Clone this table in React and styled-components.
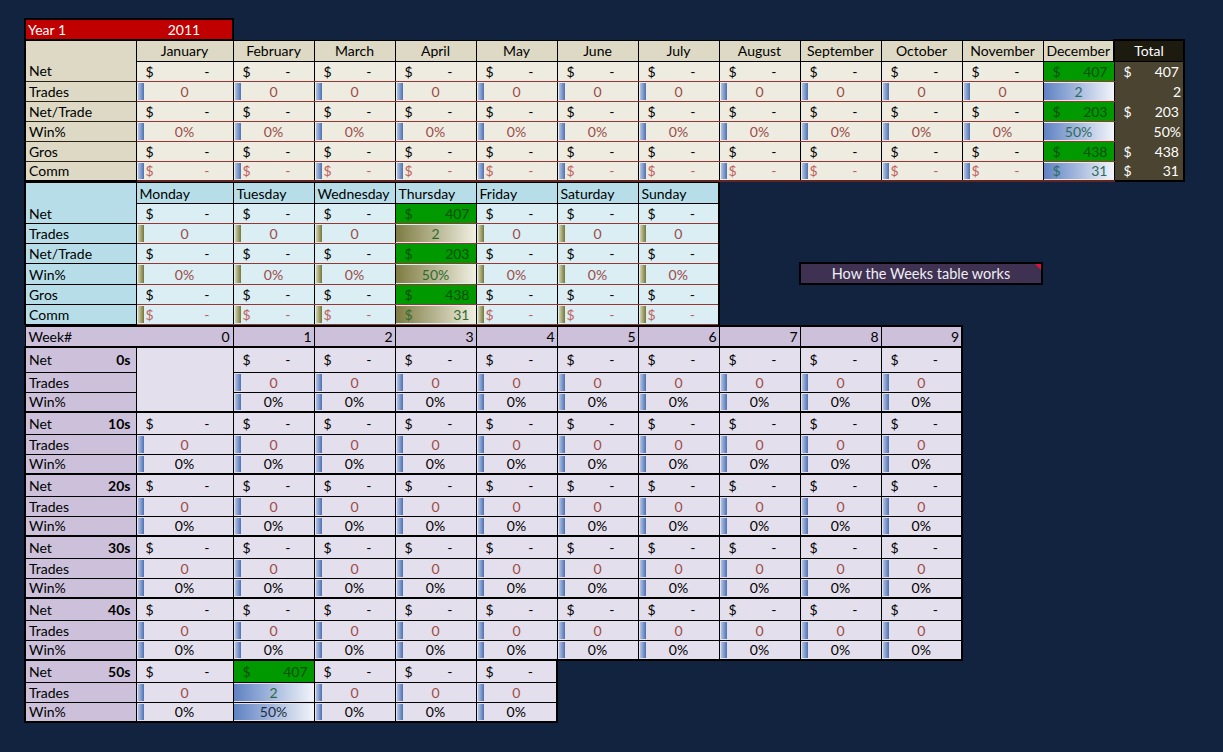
import React from "react";
import styled, { createGlobalStyle } from "styled-components";

const GlobalStyle = createGlobalStyle`
  html, body {
    margin: 0;
    padding: 0;
    background: #12233f;
  }
  body {
    font-family: Lato, "Open Sans", sans-serif;
    font-size: 14px;
    color: #000;
  }
`;

const GREEN = "#009900";
const GREEN_TEXT = "#074f07";
const ZERO_RED = "#9b4b48";
const COMM_RED = "#c0605c";

const THEMES = {
  month: {
    head: "#ddd9c4",
    label: "#ddd9c4",
    cell: "#eeece1",
    line: "#953735",
    labelLine: "#2b2218",
    bottom: "#632523",
    bar: ["#b3c4e4", "#4d71b3"],
    full: ["#5f82c3", "#f2f5fa"],
    barText: "#2e6a5c",
    pct: ZERO_RED,
  },
  day: {
    head: "#b7dee8",
    label: "#b7dee8",
    cell: "#daeef3",
    line: "#953735",
    labelLine: "#000",
    bottom: "#000",
    bar: ["#d3d4ae", "#75753a"],
    full: ["#7e7c42", "#f1f0e2"],
    barText: "#2f6b2f",
    pct: ZERO_RED,
  },
  week: {
    head: "#ccc0da",
    label: "#ccc0da",
    cell: "#e4dfec",
    line: "#000",
    labelLine: "#000",
    bottom: "#000",
    bar: ["#b3c4e4", "#4d71b3"],
    full: ["#5f82c3", "#f2f5fa"],
    barText: "#2e6a3c",
    pct: "#000",
  },
};

const Page = styled.div`
  padding: 18px 0 24px 24px;
  display: flex;
  flex-direction: column;
  align-items: flex-start;
`;

const MiddleBand = styled.div`
  display: flex;
  align-items: flex-start;
`;

const Sheet = styled.table`
  border-collapse: collapse;
  table-layout: fixed;
  width: ${(p) => p.$width}px;
  font-size: 14px;
  line-height: 17px;

  td {
    padding: 0 4px;
    white-space: nowrap;
    overflow: hidden;
    vertical-align: middle;
  }
`;

const Col = styled.col`
  width: ${(p) => p.$w}px;
`;

const Row = styled.tr`
  height: ${(p) => p.$h || 20}px;
`;

const YearCell = styled.td`
  background: #c00000;
  color: #fff;
  text-align: ${(p) => (p.$center ? "center" : "left")};
  border-top: 2px solid #000;
  border-left: ${(p) => (p.$center ? "none" : "2px solid #000")};
  border-right: ${(p) => (p.$center ? "2px solid #000" : "none")};
  && {
    padding-left: ${(p) => (p.$center ? "4px" : "2px")};
  }
`;

const Blank = styled.td`
  border: none;
  border-top: ${(p) => (p.$top ? "2px solid #000" : "none")};
  background: transparent;
`;

const HeadLabel = styled.td`
  background: ${(p) => p.$theme.label};
  border-left: 2px solid #000;
  border-top: ${(p) => (p.$top ? "2px solid #000" : "1px solid #000")};
  border-bottom: hidden;
`;

const HeadCell = styled.td`
  background: ${(p) => p.$theme.head};
  text-align: ${(p) => p.$align || "center"};
  border: 1px solid #000;
  border-top-width: ${(p) => (p.$top ? 2 : 1)}px;
  border-right-width: ${(p) => (p.$edge ? 2 : 1)}px;
  border-bottom-width: ${(p) => (p.$thickBottom ? 2 : 1)}px;
  && {
    padding: 0 ${(p) => (p.$align === "left" ? "3px" : "2px")};
  }
`;

const TotalHead = styled.td`
  background: #1d1b10;
  color: #fff;
  text-align: center;
  border: 2px solid #000;
  border-bottom-width: 1px;
`;

const LabelCell = styled.td`
  background: ${(p) => p.$theme.label};
  border-left: 2px solid #000;
  border-right: 1px solid #000;
  border-top: ${(p) =>
    p.$first ? "hidden" : p.$top ? "2px solid #000" : `1px solid ${p.$theme.labelLine}`};
  border-bottom: ${(p) => (p.$last ? "2px solid #000" : `1px solid ${p.$theme.labelLine}`)};
  && {
    padding: 0 5px 0 3px;
  }
`;

const GroupLabel = styled.div`
  display: flex;
  justify-content: space-between;
  b {
    font-weight: 700;
  }
`;

const cellBackground = ({ $theme, $bar, $green }) => {
  if ($green) return GREEN;
  if ($bar === "small")
    return `linear-gradient(to right, ${$theme.bar[0]}, ${$theme.bar[1]}) 1px 1px / 6px calc(100% - 2px) no-repeat, ${$theme.cell}`;
  if ($bar === "full")
    return `linear-gradient(to right, ${$theme.full[0]}, ${$theme.full[1]}) 0 1px / 100% calc(100% - 2px) no-repeat, ${$theme.cell}`;
  return $theme.cell;
};

const DataCell = styled.td`
  text-align: ${(p) => p.$align || "left"};
  color: ${(p) => p.$color || "#000"};
  background: ${cellBackground};
  border-left: 1px solid #000;
  border-right: ${(p) => (p.$edge ? 2 : 1)}px solid #000;
  border-top: ${(p) => (p.$top ? "2px solid #000" : `1px solid ${p.$theme.line}`)};
  border-bottom: ${(p) => (p.$last ? `2px solid ${p.$theme.bottom}` : `1px solid ${p.$theme.line}`)};
`;

const EmptyWeek = styled.td`
  background: ${(p) => p.$theme.cell};
  border: 1px solid #000;
  border-top-width: 2px;
`;

const TotalCell = styled.td`
  background: #4a4430;
  color: #fff;
  text-align: ${(p) => p.$align || "left"};
  border-left: 1px solid #000;
  border-right: 2px solid #000;
  border-top: 1px solid #4a4430;
  border-bottom: ${(p) => (p.$last ? "2px solid #000" : "1px solid #4a4430")};
  && {
    padding: 0 2px 0 4px;
  }
`;

const Money = styled.div`
  display: flex;
  justify-content: space-between;
  padding: 0 ${(p) => (p.$dash ? 19 : 2)}px 0 5px;
  color: ${(p) => p.$color || "inherit"};
`;

const HowButton = styled.button`
  position: relative;
  margin: 80px 0 0 79px;
  width: 244px;
  height: 23px;
  padding: 0;
  background: #3f3151;
  border: 2px solid #000;
  color: #f0eef4;
  font-family: Lato, "Open Sans", sans-serif;
  font-size: 14.5px;
  line-height: 18px;
  cursor: pointer;

  &::after {
    content: "";
    position: absolute;
    top: 0;
    right: 0;
    border-top: 6px solid #e0103c;
    border-left: 6px solid transparent;
  }
`;

const MONTHS = [
  "January", "February", "March", "April", "May", "June",
  "July", "August", "September", "October", "November", "December",
];
const DAYS = ["Monday", "Tuesday", "Wednesday", "Thursday", "Friday", "Saturday", "Sunday"];

const METRICS = [
  { key: "net", label: "Net", kind: "money" },
  { key: "trades", label: "Trades", kind: "count" },
  { key: "nt", label: "Net/Trade", kind: "money" },
  { key: "win", label: "Win%", kind: "pct" },
  { key: "gros", label: "Gros", kind: "money" },
  { key: "comm", label: "Comm", kind: "comm" },
];

const ACTIVE = { net: "407", trades: "2", nt: "203", win: "50%", gros: "438", comm: "31" };

function Metric({ theme, kind, value, ...rest }) {
  const on = value != null;
  if (kind === "money") {
    return (
      <DataCell $theme={theme} $green={on} {...rest}>
        <Money $dash={!on} $color={on ? GREEN_TEXT : undefined}>
          <span>$</span>
          <span>{on ? value : "-"}</span>
        </Money>
      </DataCell>
    );
  }
  if (kind === "comm") {
    return (
      <DataCell $theme={theme} $bar={on ? "full" : "small"} {...rest}>
        <Money $dash={!on} $color={on ? theme.barText : COMM_RED}>
          <span>$</span>
          <span>{on ? value : "-"}</span>
        </Money>
      </DataCell>
    );
  }
  const zero = kind === "count" ? "0" : "0%";
  const zeroColor = kind === "count" ? ZERO_RED : theme.pct;
  return (
    <DataCell
      $theme={theme}
      $bar={on ? "full" : "small"}
      $align="center"
      $color={on ? (kind === "pct" && theme === THEMES.week ? "#1f2f3f" : theme.barText) : zeroColor}
      {...rest}
    >
      {on ? value : zero}
    </DataCell>
  );
}

function MonthTable() {
  const t = THEMES.month;
  return (
    <Sheet $width={1159}>
      <colgroup>
        <Col $w={111} />
        <Col $w={97} />
        {MONTHS.slice(1, 11).map((m) => (
          <Col key={m} $w={81} />
        ))}
        <Col $w={71} />
        <Col $w={70} />
      </colgroup>
      <tbody>
        <Row $h={21}>
          <YearCell>Year 1</YearCell>
          <YearCell $center>2011</YearCell>
          <Blank colSpan={12} />
        </Row>
        <Row $h={21}>
          <HeadLabel $theme={t} $top />
          {MONTHS.map((m) => (
            <HeadCell key={m} $theme={t} $top={m === "January"}>
              {m}
            </HeadCell>
          ))}
          <TotalHead>Total</TotalHead>
        </Row>
        {METRICS.map((metric, i) => {
          const last = i === METRICS.length - 1;
          const total = ACTIVE[metric.key];
          const plain = metric.kind === "count" || metric.kind === "pct";
          return (
            <Row key={metric.key}>
              <LabelCell $theme={t} $first={i === 0} $last={last}>
                {metric.label}
              </LabelCell>
              {MONTHS.map((m, mi) => (
                <Metric
                  key={m}
                  theme={t}
                  kind={metric.kind}
                  value={mi === 11 ? ACTIVE[metric.key] : null}
                  $last={last}
                />
              ))}
              <TotalCell $align={plain ? "right" : "left"} $last={last}>
                {plain ? (
                  total
                ) : (
                  <Money>
                    <span>$</span>
                    <span>{total}</span>
                  </Money>
                )}
              </TotalCell>
            </Row>
          );
        })}
      </tbody>
    </Sheet>
  );
}

function DayTable() {
  const t = THEMES.day;
  return (
    <Sheet $width={694}>
      <colgroup>
        <Col $w={111} />
        <Col $w={97} />
        {DAYS.slice(1).map((d) => (
          <Col key={d} $w={81} />
        ))}
      </colgroup>
      <tbody>
        <Row $h={21}>
          <HeadLabel $theme={t} />
          {DAYS.map((d, di) => (
            <HeadCell key={d} $theme={t} $align="left" $edge={di === 6}>
              {d}
            </HeadCell>
          ))}
        </Row>
        {METRICS.map((metric, i) => (
          <Row key={metric.key} $h={i === 3 ? 21 : 20}>
            <LabelCell $theme={t} $first={i === 0}>
              {metric.label}
            </LabelCell>
            {DAYS.map((d, di) => (
              <Metric
                key={d}
                theme={t}
                kind={metric.kind}
                value={di === 3 ? ACTIVE[metric.key] : null}
                $edge={di === 6}
              />
            ))}
          </Row>
        ))}
      </tbody>
    </Sheet>
  );
}

const WEEK_METRICS = [
  { key: "net", label: "Net", kind: "money" },
  { key: "trades", label: "Trades", kind: "count" },
  { key: "win", label: "Win%", kind: "pct" },
];

const WEEK_COLS = [0, 1, 2, 3, 4, 5, 6, 7, 8, 9];

function WeekTable() {
  const t = THEMES.week;
  return (
    <Sheet $width={937}>
      <colgroup>
        <Col $w={111} />
        <Col $w={97} />
        {WEEK_COLS.slice(1).map((c) => (
          <Col key={c} $w={81} />
        ))}
      </colgroup>
      <tbody>
        <Row $h={21}>
          <HeadCell colSpan={2} $theme={t} $top $thickBottom $align="left">
            <GroupLabel>
              <span>Week#</span>
              <span>0</span>
            </GroupLabel>
          </HeadCell>
          {WEEK_COLS.slice(1).map((c) => (
            <HeadCell key={c} $theme={t} $top $thickBottom $align="right" $edge={c === 9}>
              {c}
            </HeadCell>
          ))}
        </Row>
        {[0, 1, 2, 3, 4, 5].map((g) => {
          const lastGroup = g === 5;
          const cols = lastGroup ? WEEK_COLS.slice(0, 5) : WEEK_COLS;
          return WEEK_METRICS.map((metric, i) => {
            const top = i === 0;
            const last = lastGroup && i === 2;
            const height = top ? (g === 0 ? 25 : 22) : 20;
            return (
              <Row key={`${g}-${metric.key}`} $h={height}>
                <LabelCell $theme={t} $top={top} $last={last}>
                  {top ? (
                    <GroupLabel>
                      <span>{metric.label}</span>
                      <b>{g === 0 ? "0s" : `${g}0s`}</b>
                    </GroupLabel>
                  ) : (
                    metric.label
                  )}
                </LabelCell>
                {g === 0 && top && <EmptyWeek rowSpan={3} $theme={t} />}
                {cols.map((c) => {
                  if (g === 0 && c === 0) return null;
                  const week = g * 10 + c;
                  return (
                    <Metric
                      key={c}
                      theme={t}
                      kind={metric.kind}
                      value={week === 51 ? ACTIVE[metric.key] : null}
                      $top={top}
                      $last={last}
                      $edge={c === cols.length - 1}
                    />
                  );
                })}
                {lastGroup &&
                  WEEK_COLS.slice(5).map((c) => <Blank key={c} $top={top} />)}
              </Row>
            );
          });
        })}
      </tbody>
    </Sheet>
  );
}

export default function App() {
  return (
    <>
      <GlobalStyle />
      <Page>
        <MonthTable />
        <MiddleBand>
          <DayTable />
          <HowButton type="button">How the Weeks table works</HowButton>
        </MiddleBand>
        <WeekTable />
      </Page>
    </>
  );
}
